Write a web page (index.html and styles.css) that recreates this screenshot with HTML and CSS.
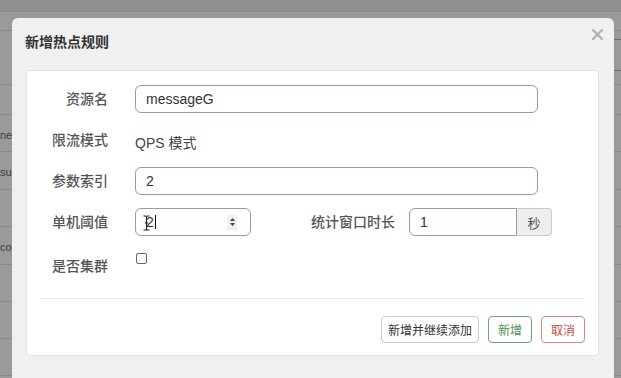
FILE: index.html
```html
<!DOCTYPE html>
<html lang="zh-CN">
<head>
    <meta charset="UTF-8">
    <meta name="viewport" content="width=device-width, initial-scale=1.0">
    <title>新增热点规则</title>
    <link rel="stylesheet" href="styles.css">
</head>
<body>
    <div class="backdrop">
        <div class="bg-row bg-top"></div>
        <div class="bg-row h19"></div>
        <div class="bg-row h54"><span class="bg-tab"></span></div>
        <div class="bg-row h30"></div>
        <div class="bg-row h37"><span class="bg-text">ne</span></div>
        <div class="bg-row h38"><span class="bg-text">sur</span></div>
        <div class="bg-row h37"></div>
        <div class="bg-row h38"><span class="bg-text">co</span></div>
        <div class="bg-row h37"></div>
        <div class="bg-row h37"></div>
        <div class="bg-row h37"></div>
    </div>

    <div class="modal">
        <div class="modal-header">
            <h4 class="modal-title">新增热点规则</h4>
            <svg class="close" width="11" height="11" viewBox="0 0 11 11">
                <path d="M1 1 L10 10 M10 1 L1 10" stroke="#b3b3b3" stroke-width="2.4" stroke-linecap="round"/>
            </svg>
        </div>

        <div class="panel">
            <div class="form-row">
                <label class="form-label">资源名</label>
                <input class="form-control wide" type="text" value="messageG">
            </div>
            <div class="form-row">
                <label class="form-label">限流模式</label>
                <span class="static-text">QPS 模式</span>
            </div>
            <div class="form-row">
                <label class="form-label">参数索引</label>
                <input class="form-control wide" type="text" value="2">
            </div>
            <div class="form-row">
                <label class="form-label">单机阈值</label>
                <div class="form-control number">
                    <svg class="ibeam" width="7" height="16" viewBox="0 0 7 16">
                        <path d="M0.5 1 H2.5 Q3.5 1 3.5 2.5 V13.5 Q3.5 15 2.5 15 H0.5 M6.5 1 H4.5 Q3.5 1 3.5 2.5 M3.5 13.5 Q3.5 15 4.5 15 H6.5 M2 8 H5" stroke="#222" stroke-width="1.1" fill="none"/>
                    </svg>
                    <span class="num-value">2</span>
                    <span class="spinner">
                        <svg width="9" height="14" viewBox="0 0 9 14">
                            <path d="M4.5 3 L7 6 H2 Z M4.5 11 L7 8 H2 Z" fill="#444"/>
                        </svg>
                    </span>
                </div>
                <label class="form-label window-label">统计窗口时长</label>
                <div class="input-group">
                    <input class="form-control grouped" type="text" value="1">
                    <span class="addon">秒</span>
                </div>
            </div>
            <div class="form-row top">
                <label class="form-label checkbox-label">是否集群</label>
                <span class="checkbox"></span>
            </div>

            <hr class="divider">

            <div class="actions">
                <button class="btn">新增并继续添加</button>
                <button class="btn btn-success">新增</button>
                <button class="btn btn-danger">取消</button>
            </div>
        </div>
    </div>
</body>
</html>
```

FILE: styles.css
```css
* {
    margin: 0;
    padding: 0;
    box-sizing: border-box;
    font-family: 'Liberation Sans', 'Noto Sans CJK SC', sans-serif;
}

body {
    width: 621px;
    height: 378px;
    overflow: hidden;
    background: #9a9a9a;
    position: relative;
}

/* page behind the overlay */
.bg-row {
    display: flex;
    align-items: center;
    justify-content: space-between;
    border-bottom: 1px solid #8a8a8a;
}

.bg-top { height: 12px; background: #8f8f8f; }
.h19 { height: 19px; }
.h30 { height: 30px; }
.h37 { height: 37px; }
.h38 { height: 38px; }
.h54 { height: 54px; align-items: flex-start; justify-content: flex-end; }

.bg-tab {
    width: 10px;
    height: 32px;
    margin-top: 8px;
    border-top: 1px solid #5d6c8a;
    border-bottom: 1px solid #5d6c8a;
}

.bg-text {
    font-size: 11px;
    color: #3c3c3c;
    padding-top: 3px;
}

/* modal */
.modal {
    position: absolute;
    left: 12px;
    top: 18px;
    width: 602px;
    height: 360px;
    background: #f0f0f0;
    border-radius: 6px 6px 0 0;
}

.modal-header {
    display: flex;
    justify-content: space-between;
    align-items: flex-start;
    padding: 14px 11px 0 13px;
    height: 52px;
}

.modal-title {
    font-size: 14px;
    line-height: 20px;
    font-weight: bold;
    color: #333;
}

.close {
    margin-top: -3px;
}

.panel {
    margin: 0 15px 0 14px;
    background: #fff;
    border: 1px solid #e2e2e2;
    border-radius: 4px;
    padding: 14px 13px 12px 13px;
}

.form-row {
    display: flex;
    align-items: center;
    height: 28px;
    margin-bottom: 13px;
}

.form-row.top {
    align-items: flex-start;
    height: 27px;
    margin-bottom: 0;
}

.form-label {
    width: 68px;
    margin-right: 27px;
    text-align: right;
    font-size: 14px;
    line-height: 20px;
    font-weight: 500;
    color: #555;
    flex-shrink: 0;
}

.window-label {
    width: 144px;
    margin-right: 14px;
}

.checkbox-label {
    padding-top: 7px;
}

.static-text {
    font-size: 14px;
    color: #444;
    padding-top: 3px;
}

.form-control {
    height: 28px;
    border: 1px solid #8b9db8;
    border-radius: 6px;
    padding: 0 10px;
    font-size: 14px;
    color: #333;
    background: #fff;
    outline: none;
}

.wide {
    width: 403px;
}

.number {
    width: 116px;
    display: flex;
    align-items: center;
    position: relative;
}

.ibeam {
    position: absolute;
    left: 7px;
    top: 6px;
}

.num-value {
    padding-right: 1px;
    border-right: 1px solid #111;
    line-height: 14px;
}

.spinner {
    margin-left: auto;
    margin-right: 3px;
    width: 10px;
    height: 15px;
    background: #efefef;
    display: flex;
    align-items: center;
    justify-content: center;
}

.input-group {
    display: flex;
}

.grouped {
    width: 108px;
    border-radius: 6px 0 0 6px;
}

.addon {
    width: 35px;
    height: 28px;
    display: flex;
    align-items: center;
    justify-content: center;
    background: #eee;
    border: 1px solid #ccc;
    border-left: none;
    border-radius: 0 4px 4px 0;
    font-size: 13px;
    color: #555;
}

.checkbox {
    width: 11px;
    height: 11px;
    margin-top: 4px;
    margin-left: 1px;
    border: 1px solid #666;
    border-radius: 2px;
    background: #fff;
}

.divider {
    border: none;
    border-top: 1px solid #e6e6e6;
    margin: 22px 0 17px;
}

.actions {
    display: flex;
    justify-content: flex-end;
    gap: 9px;
}

.btn {
    height: 27px;
    min-width: 44px;
    padding: 0 6px;
    font-size: 12px;
    color: #333;
    background: #fff;
    border: 1px solid #ccc;
    border-radius: 4px;
}

.btn-success {
    color: #4f8f4f;
    border-color: #6fa66f;
}

.btn-danger {
    color: #c54a44;
    border-color: #d68683;
}
```
